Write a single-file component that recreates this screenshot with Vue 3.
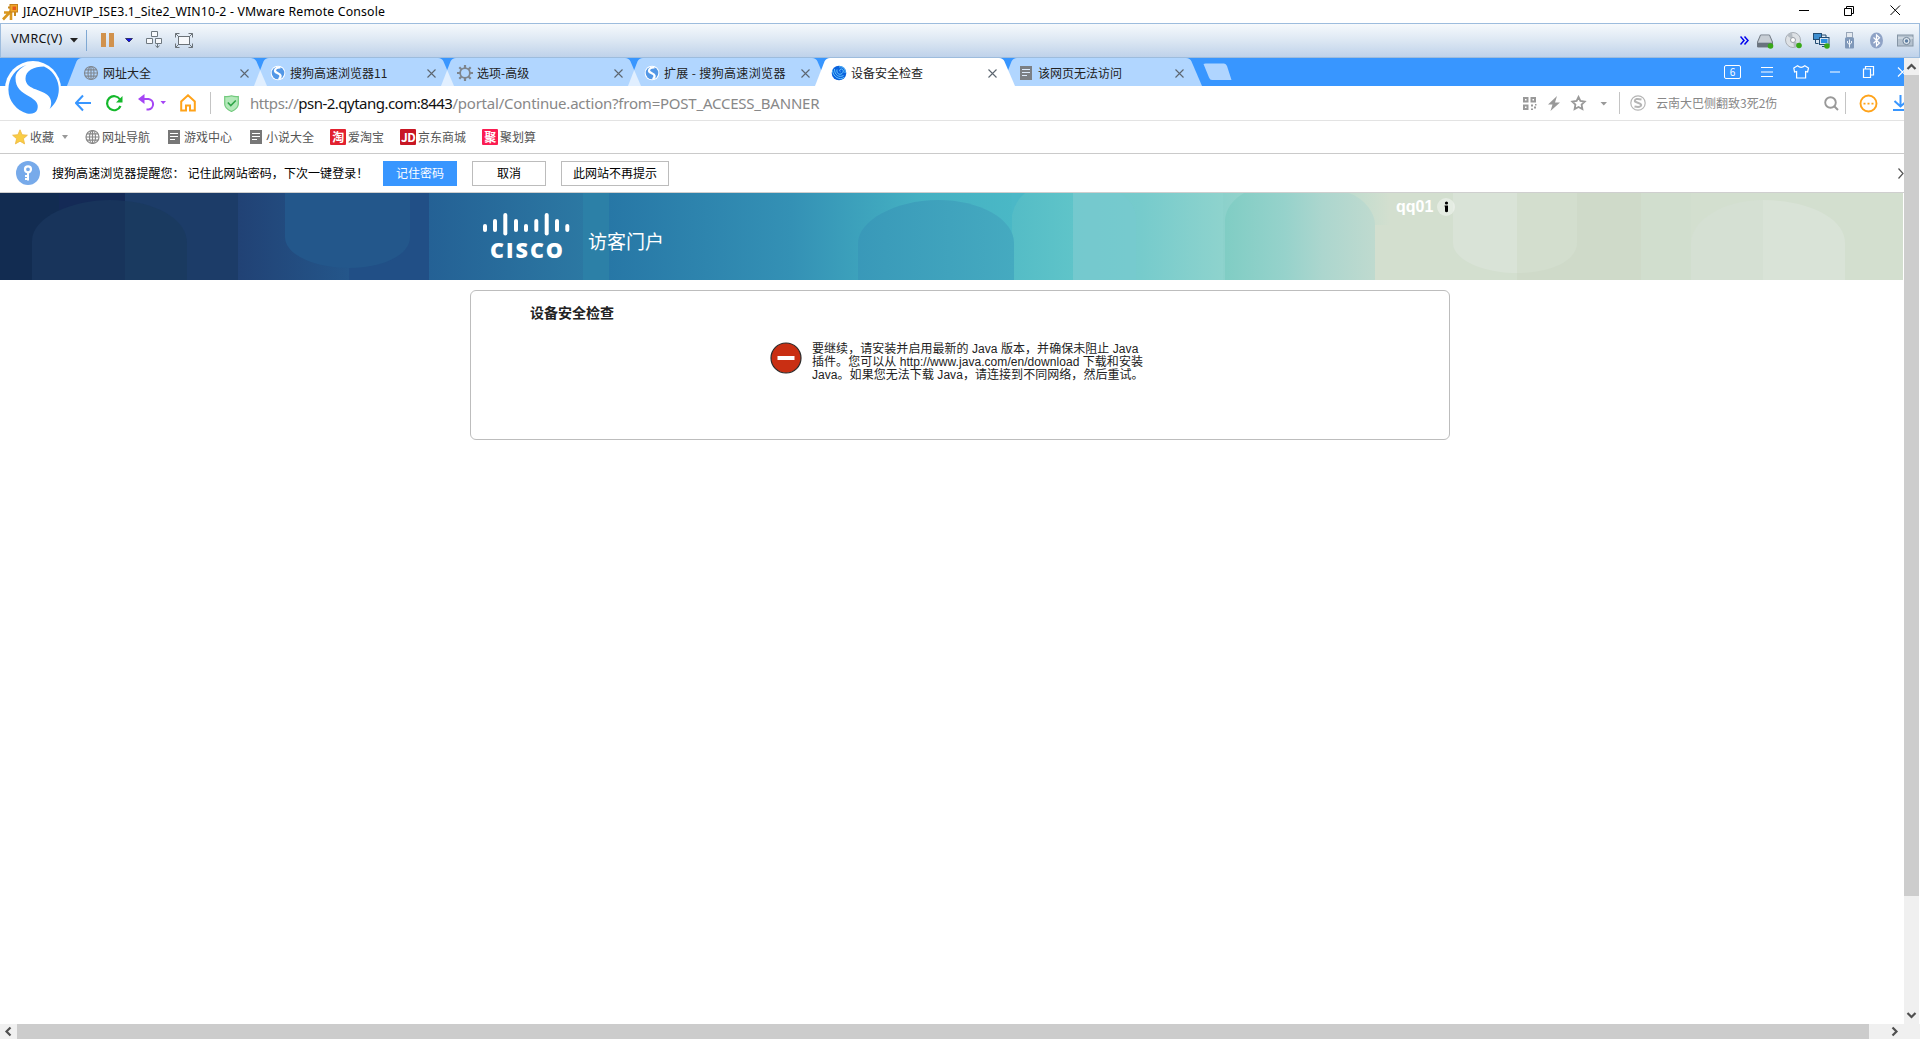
<script setup>
const tabs = [
  { title: '网址大全', icon: 'globe' },
  { title: '搜狗高速浏览器11', icon: 'sogou' },
  { title: '选项-高级', icon: 'gear' },
  { title: '扩展 - 搜狗高速浏览器', icon: 'sogou', spread: true },
  { title: '设备安全检查', icon: 'swirl', active: true },
  { title: '该网页无法访问', icon: 'page' },
]
const bars = [
  [485, 31, 39], [495, 26, 39], [505.3, 20, 42.5], [516, 26, 39], [526, 31, 39],
  [536.3, 26, 39], [546.7, 20, 42.5], [557, 26, 39], [567.3, 31, 39],
]
</script>

<template>
  <div class="window">
    <header class="titlebar">
      <svg class="vm-logo" width="17" height="18" viewBox="0 0 17 18">
        <path d="M6 4.500h4M13 9v4" fill="none" stroke="#c98a1c" stroke-width="2" />
        <path d="M1 16.500 8.500 8.500M2 9.500h7v7.500" fill="none" stroke="#d9971f" stroke-width="2.600" />
        <rect x="8" y="1.500" width="7.500" height="7.500" fill="#f0a628" stroke="#c5801a" />
        <rect x="10.500" y="3.500" width="3.500" height="3.500" fill="#e4581c" />
      </svg>
      <span class="title">JIAOZHUVIP_ISE3.1_Site2_WIN10-2 - VMware Remote Console</span>
      <svg class="win-controls" width="104" height="12" viewBox="0 0 104 12" fill="none" stroke="#000">
        <path d="M0 6.500h10M45.500 4.500h7v7h-7zM47.500 4.500v-2h7v7h-2M91.500 1.500l9.500 9.500M101 1.500l-9.500 9.500" />
      </svg>
    </header>

    <div class="vmbar">
      <span class="vmrc">VMRC(V)</span>
      <svg class="caret" width="8" height="5"><path d="M0 0h8l-4 4.500z" fill="#222" /></svg>
      <i class="vsep"></i>
      <svg class="pause" width="13" height="14"><path d="M0 0h5v14H0zM8 0h5v14H8z" fill="#d1924d" /></svg>
      <svg class="caret2" width="8" height="5"><path d="M.5 .5h7l-3.500 3.500z" fill="#11e" stroke="#002" stroke-width=".6" /></svg>
      <svg class="cad" width="17" height="18" viewBox="0 0 17 18" fill="#f7f9fc" stroke="#6e7880">
        <path d="M5.500.5h6v5h-6zM.5 7.500h6v5h-6zM9.500 7.500h6v5h-6z" />
        <path d="M11.500 12.500v4M9.500 14.500l2 2.300 2-2.300" fill="none" />
      </svg>
      <svg class="full" width="18" height="15" viewBox="0 0 18 15" fill="none" stroke="#6b7278">
        <rect x="3.500" y="3.500" width="11" height="8" fill="#f6f8fb" />
        <path d="M.5 4.500v-4h4M13.500.5h4v4M17.500 10.500v4h-4M4.500 14.500h-4v-4M.5.5l3 3M17.500.5l-3 3M.5 14.500l3-3M17.500 14.500l-3-3" />
      </svg>
      <div class="devices">
        <svg width="9" height="9" viewBox="0 0 9 9"><path d="M.5.5l3.500 4-3.500 4M4.500.5l3.500 4-3.500 4" fill="none" stroke="#00e" stroke-width="1.500" /></svg>
        <svg width="17" height="16" viewBox="0 0 17 16">
          <path d="M3.500 2h9l3 7v5H.5V9z" fill="#a9b2bb" stroke="#757d86" /><path d="M4 2.500h8l2.500 6.500H1.500z" fill="#c8ced5" />
          <path d="M.5 10h15v4H.5z" fill="#69737e" /><circle cx="13.500" cy="13" r="2.800" fill="#38a818" />
        </svg>
        <svg width="17" height="17" viewBox="0 0 17 17">
          <circle cx="8" cy="8" r="7.500" fill="#dde1e5" stroke="#a9afb6" /><path d="M8 8 2 3.500A7.500 7.500 0 0 1 7 .6zM8 8l6 4.500a7 7 0 0 1-5 3z" fill="#b5bcc3" />
          <circle cx="8" cy="8" r="2.500" fill="#fff" stroke="#999fa6" /><circle cx="14" cy="13.500" r="2.800" fill="#38a818" />
        </svg>
        <svg width="17" height="17" viewBox="0 0 17 17" stroke="#234c72">
          <rect x=".5" y="1.500" width="8" height="6" fill="#3f8fd0" /><path d="M2.500 8v3.500h3M9 3h4v2M9 14.500h6" fill="none" />
          <rect x="6.500" y="5.500" width="9.500" height="7" fill="#d7e6f3" /><rect x="8" y="7" width="6.500" height="4" fill="#2b8ee0" stroke="none" />
          <circle cx="14" cy="14" r="2.800" fill="#38a818" stroke="none" />
        </svg>
        <svg width="11" height="17" viewBox="0 0 11 17">
          <rect x="2.500" y=".5" width="6" height="5" fill="#e4e9ef" stroke="#98a6b8" /><rect x="1" y="5.500" width="9" height="11" rx="1" fill="#7f98b9" />
          <path d="M5.500 7.500v8M3.500 9v2l2 1.500 2-1.500V9" fill="none" stroke="#eef3f8" />
        </svg>
        <svg width="13" height="17" viewBox="0 0 13 17"><ellipse cx="6.500" cy="8.500" rx="6.500" ry="8" fill="#8fa3c6" /><path d="M3.500 5.500l6 5.500-3 2.800V3l3 2.800-6 5.500" fill="none" stroke="#fff" stroke-width="1.200" /></svg>
        <svg width="17" height="13" viewBox="0 0 17 13"><rect x=".5" y="1" width="15.500" height="11" fill="#b5c2cf" stroke="#8595a5" /><path d="M1 4h15" stroke="#e4ebf1" /><circle cx="9.500" cy="7" r="3.600" fill="#dfe7ee" stroke="#71859a" /><circle cx="9.500" cy="7" r="1.700" fill="#5d7ea3" /></svg>
      </div>
    </div>

    <div class="desk">
      <div class="browser">
        <svg class="sogou-logo" width="64" height="60" viewBox="0 -2 64 60">
          <circle cx="33" cy="31" r="28" fill="#fff" />
          <path d="M26.500 7A25.200 25.200 0 0 0 27 55.500c4 1 9 0 10.300-4 2-6-2-9.500-8-13C21 34 15.500 30 15.500 20c0-5 4-9.500 11-13z" fill="#3896ff" />
          <path d="M44 8.500c-10 0-18.500 4-18.500 12 0 11 15 10.500 22 16.500 4.500 4 4.500 9.500 2 14A25.200 25.200 0 0 0 44 8.500z" fill="#3896ff" />
        </svg>
        <div class="tabstrip">
          <div v-for="t in tabs" :key="t.title" class="tab" :class="{ active: t.active, spread: t.spread }">
            <svg class="shape" width="200" height="28" viewBox="0 0 200 28"><path d="M0 28 9.500 3.500Q11 0 15 0H184Q188 0 189.500 3.500L200 28z" /></svg>
            <svg class="fav" width="16" height="16" viewBox="0 0 16 16">
              <g v-if="t.icon === 'globe'" fill="none" stroke="#808891" stroke-width="1.200"><circle cx="8" cy="8" r="6.500" /><ellipse cx="8" cy="8" rx="3" ry="6.500" /><path d="M1.500 8h13M8 1.500v13M2.500 4.800h11M2.500 11.200h11" /></g>
              <g v-else-if="t.icon === 'sogou'"><circle cx="8" cy="8" r="7.300" fill="#fff" /><circle cx="8" cy="8" r="6.300" fill="#5297e6" /><path d="M10.500 2.500C7.500 2 4.800 3.500 5 6c.3 2.300 5.200 2.300 5.500 4.500.2 1.500-.5 3-2 3.500" fill="none" stroke="#fff" stroke-width="2.300" /></g>
              <g v-else-if="t.icon === 'gear'" fill="none" stroke="#7e858d"><circle cx="8" cy="8" r="4.900" stroke-width="1.800" /><path d="M8 0v3M8 13v3M0 8h3M13 8h3M2.300 2.300l2 2M11.700 11.700l2 2M2.300 13.700l2-2M11.700 4.300l2-2" stroke-width="2.200" /></g>
              <g v-else-if="t.icon === 'swirl'"><circle cx="8" cy="8" r="7.300" fill="#0a62dd" /><path d="M1.500 5.500C2 12 9 15.500 13 12.500M3.500 4c0 6 4.500 9 9 6.500M6 4.500c-.8 4 2.500 6 5 4s1-5-1-4.500-1.500 2.500-.5 2.800M8 2c4-1 7 2 6 6" fill="none" stroke="#6fd0ff" stroke-width=".9" /></g>
              <g v-else><path d="M2 1h12v14H2z" fill="#7b7f84" /><path d="M4 4.500h8M4 7.500h8M4 10.500h5" stroke="#dbe9fa" stroke-width="1.200" /></g>
            </svg>
            <span class="tab-title">{{ t.title }}</span>
            <svg class="close" width="9" height="9" viewBox="0 0 9 9"><path d="M.5.5l8 8M8.500.5l-8 8" fill="none" stroke="#5d6670" stroke-width="1.100" /></svg>
          </div>
          <svg class="newtab" width="29" height="18"><path d="M2.500.500H21Q23 .5 24 3l4.500 14H9Q7 17 6 14.500L.5 1z" fill="#b0d5ff" /></svg>
          <div class="strip-tools">
            <span class="count">6</span>
            <svg width="179" height="14" viewBox="0 0 179 14" fill="none" stroke="#fff" stroke-width="1.200">
              <path d="M3 2.500h12M3 7h12M3 11.500h12" />
              <path d="M39.500.800 35.800 3l.8 4 2-.5v6.500h9V6.500l2 .5.9-4-3.700-2.200q-3.700 3-7.300 0z" />
              <path d="M72 7h10M105.500 4h7v8.500h-7zM107.500 4v-2.500h8v8.500h-2.500M140 2.500l9 9M149 2.500l-9 9" />
            </svg>
          </div>
        </div>

        <div class="addressbar">
          <svg class="nav" width="112" height="20" viewBox="0 0 112 20" fill="none" stroke-width="2">
            <path d="M16 10H1M8 2.500 1 10l7 7.500" stroke="#3896ff" />
            <path d="M45 6.500A7 7 0 1 0 45.500 13" stroke="#14b82b" stroke-width="2.200" /><path d="M47.500 3v6.500H41z" fill="#14b82b" />
            <path d="M66 6H73.500a5.300 5.300 0 0 1 0 10.500h-2" stroke="#a545f5" /><path d="M69.500 1v10l-6.500-5z" fill="#a545f5" /><path d="M85.500 8h5.500l-2.800 3.200z" fill="#a545f5" />
          </svg>
          <svg class="home" width="16" height="18" viewBox="0 0 16 18"><path d="M1.200 7.500 8 1.300l6.800 6.200V16.500H10v-5H6v5H1.200z" fill="none" stroke="#ffa31a" stroke-width="2" /></svg>
          <i class="asep"></i>
          <svg class="shield" width="15" height="17" viewBox="0 0 15 17"><path d="M.7 1.500Q4.500 2 7.500.8 10.500 2 14.300 1.500V9q0 4.500-6.800 7.500Q.7 13.500.7 9z" fill="#b4e8ba" stroke="#73ca7e" stroke-width="1.200" /><path d="M3.800 7.500 6.800 10.500l5-5" fill="none" stroke="#2fa548" stroke-width="1.600" /></svg>
          <span class="url"><span class="scheme">https://</span><b>psn-2.qytang.com:8443</b>/portal/Continue.action?from=POST_ACCESS_BANNER</span>
          <div class="addr-right">
            <svg width="85" height="16" viewBox="0 0 85 16" fill="none" stroke="#999" stroke-width="2">
              <path d="M2 3h3.500v3.500H2zM9.500 3H13v3.500H9.500zM2 10.500h3.500V14H2z" /><path d="M9 9.500h2v2H9zM12 11.500h2v2h-2zM9 13.500h2v1.500H9zM13 9h1.500v1.500H13z" fill="#999" stroke="none" />
              <path d="M35 1l-9 8.500h4.500L28.500 16 38 7.500h-5z" fill="#999" stroke="none" />
              <path d="M56.500 2l1.900 4 4.300.6-3.100 3 .8 4.400-3.900-2.100-3.900 2.100.8-4.400-3.100-3 4.300-.6z" stroke-width="1.800" /><path d="M78.500 7H85l-3.200 3.500z" fill="#999" stroke="none" />
            </svg>
            <i class="asep s1"></i>
            <svg class="s-gray" width="16" height="16" viewBox="0 0 16 16" fill="none" stroke="#b5b5b5"><circle cx="8" cy="8" r="7.200" stroke-width="1.200" /><path d="M11.500 4.500Q5 3 4.800 5.800C4.600 8 11.300 7.500 11.200 10.200Q11 12.700 4.500 11.500" stroke-width="2" /></svg>
            <span class="query">云南大巴侧翻致3死2伤</span>
            <svg class="mag" width="15" height="15" viewBox="0 0 15 15" fill="none" stroke="#999" stroke-width="1.900"><circle cx="6.500" cy="6.500" r="5.300" /><path d="M10.500 10.500l3.500 3.500" /></svg>
            <i class="asep s2"></i>
            <svg class="dots" width="19" height="19" viewBox="0 0 19 19"><circle cx="9.500" cy="9.500" r="8" fill="none" stroke="#ffa31a" stroke-width="1.900" /><path d="M4.500 8.700h2v1.700h-2zM8.500 8.700h2v1.700h-2zM12.500 8.700h2v1.700h-2z" fill="#ffa31a" /></svg>
            <svg class="down" width="11" height="16" viewBox="0 0 11 16" fill="none" stroke="#3896ff" stroke-width="2"><path d="M7.500 0v11M1.500 6l6 5.500 4-3.500M0 15h11" /></svg>
          </div>
        </div>

        <nav class="bookmarks">
          <svg class="star" width="16" height="16" viewBox="0 0 16 16"><path d="M8 .8l2.100 4.900 5.300.5-4 3.500 1.200 5.200L8 12.200l-4.600 2.700 1.200-5.200-4-3.500 5.300-.5z" fill="#f9cd45" stroke="#eeb640" stroke-width=".8" /></svg>
          <span>收藏</span>
          <svg class="bcaret" width="6" height="4"><path d="M0 0h6L3 4z" fill="#999" /></svg>
          <svg class="bm" width="15" height="16" viewBox="0 0 15 16" fill="none" stroke="#888" stroke-width="1.200"><circle cx="7.500" cy="8" r="6.500" /><ellipse cx="7.500" cy="8" rx="3" ry="6.500" /><path d="M1 8h13M7.500 1.500v13M2 4.800h11M2 11.200h11" /></svg>
          <span>网址导航</span>
          <svg class="bm pg" width="12" height="14" viewBox="0 0 12 14"><path d="M0 0h12v14H0z" fill="#777" /><path d="M2 3.500h8M2 6.500h8M2 9.500h5" stroke="#fff" stroke-width="1.200" /></svg>
          <span class="g4">游戏中心</span>
          <svg class="bm pg" width="12" height="14" viewBox="0 0 12 14"><path d="M0 0h12v14H0z" fill="#777" /><path d="M2 3.500h8M2 6.500h8M2 9.500h5" stroke="#fff" stroke-width="1.200" /></svg>
          <span class="g4">小说大全</span>
          <b class="sq tao">淘</b><span>爱淘宝</span>
          <b class="sq jd">JD</b><span>京东商城</span>
          <b class="sq ju">聚</b><span>聚划算</span>
        </nav>

        <div class="notice">
          <svg class="key" width="24" height="24" viewBox="0 0 24 24"><circle cx="12" cy="12" r="12" fill="#77aaea" /><circle cx="12" cy="8.300" r="3" fill="none" stroke="#fff" stroke-width="2.200" /><path d="M12 11.500v8M12 15h-3M12 18h-3" stroke="#fff" stroke-width="2" /></svg>
          <span class="msg">搜狗高速浏览器提醒您： 记住此网站密码，下次一键登录！</span>
          <button class="btn primary">记住密码</button>
          <button class="btn">取消</button>
          <button class="btn wide">此网站不再提示</button>
          <svg class="nclose" width="6" height="11" viewBox="0 0 6 11"><path d="M.5 .5l4.500 5-4.500 5" fill="none" stroke="#555" stroke-width="1.200" /></svg>
        </div>

        <div class="banner">
          <svg class="art" width="1903" height="87" viewBox="0 0 1903 87">
            <defs>
              <linearGradient id="g1" x1="238" x2="349" gradientUnits="userSpaceOnUse"><stop offset="0" stop-color="#214275" /><stop offset="1" stop-color="#24568a" /></linearGradient>
              <linearGradient id="g2" x1="429" x2="609" gradientUnits="userSpaceOnUse"><stop offset="0" stop-color="#246195" /><stop offset="1" stop-color="#2d7ca5" /></linearGradient>
              <linearGradient id="g3" x1="609" x2="1015" gradientUnits="userSpaceOnUse"><stop offset="0" stop-color="#2777a6" /><stop offset=".45" stop-color="#3491b5" /><stop offset=".76" stop-color="#44b0c2" /><stop offset="1" stop-color="#4ab8c6" /></linearGradient>
              <linearGradient id="g4" x1="800" x2="1014" gradientUnits="userSpaceOnUse"><stop offset="0" stop-color="#3591b7" /><stop offset=".4" stop-color="#3b9cba" /><stop offset="1" stop-color="#45aac0" /></linearGradient>
              <linearGradient id="g5" x1="1073" x2="1223" gradientUnits="userSpaceOnUse"><stop offset="0" stop-color="#71c8cc" /><stop offset=".45" stop-color="#76cbcc" /><stop offset="1" stop-color="#8ed3cd" /></linearGradient>
              <linearGradient id="g6" x1="1225" x2="1375" gradientUnits="userSpaceOnUse"><stop offset="0" stop-color="#80cdc4" /><stop offset=".4" stop-color="#96d2cb" /><stop offset=".65" stop-color="#acd6ce" /><stop offset="1" stop-color="#bfdacf" /></linearGradient>
              <linearGradient id="g7" x1="1223" x2="1390" gradientUnits="userSpaceOnUse"><stop offset="0" stop-color="#8bd1cb" /><stop offset=".6" stop-color="#b2dacd" /><stop offset="1" stop-color="#d3dfcf" /></linearGradient>
              <linearGradient id="g8" x1="1012" x2="1073" gradientUnits="userSpaceOnUse"><stop offset="0" stop-color="#54bcc6" /><stop offset="1" stop-color="#5fc4c9" /></linearGradient>
            </defs>
            <rect width="59" height="87" fill="#122c51" /><rect x="59" width="66" height="87" fill="#142a56" />
            <rect x="125" width="113" height="87" fill="#1c3c68" />
            <path d="M32 87V48C32 24 72 7 110 7q8 0 15 1v79z" fill="#18345b" /><path d="M125 8c35 3 62 20 62 42v37h-62z" fill="#1a3a60" />
            <rect x="238" width="111" height="87" fill="url(#g1)" /><rect x="349" width="80" height="87" fill="#214f86" />
            <path d="M285 0v44c0 18 30 31 64 31s61-13 61-31V0z" fill="#23578b" />
            <rect x="429" width="180" height="87" fill="url(#g2)" /><rect x="583" width="26" height="87" fill="#2c80a7" />
            <rect x="609" width="406" height="87" fill="url(#g3)" />
            <path d="M1012 0h61v87h-61z" fill="url(#g8)" /><path d="M1012 0h13q-10 8-13 22z" fill="#4bb8c7" />
            <path d="M858 87V50C858 28 895 7 938 7c42 0 76 19 76 43v37z" fill="url(#g4)" />
            <rect x="1073" width="150" height="87" fill="url(#g5)" />
            <path d="M1073 0h47q14 8 16 24v63h-63z" fill="#76cacf" opacity=".65" />
            <rect x="1223" width="167" height="87" fill="url(#g7)" />
            <path d="M1225 87V26q2-16 19-26h105c16 6 26 20 26 32v55z" fill="url(#g6)" />
            <rect x="1375" y="32" width="30" height="55" fill="#d3dfcf" />
            <rect x="1389" width="514" height="87" fill="#d3dfcf" />
            <rect x="1517" width="124" height="87" fill="#cfdac9" /><rect x="1641" width="50" height="87" fill="#d1dece" />
            <path d="M1453 0v50c0 16 28 30 64 30V0z" fill="#d9e3d7" /><path d="M1517 0h60v50c0 17-25 30-60 30z" fill="#d3dece" />
            <path d="M1691 87V50c0-23 33-43 72-43v80z" fill="#d5e0d3" /><path d="M1763 7c45 0 82 18 82 43v37h-82z" fill="#d9e3d7" />
            <g stroke="#fff" stroke-width="4" stroke-linecap="round"><path v-for="b in bars" :key="b[0]" :d="`M${b[0]} ${b[1] + 2}V${b[2] - 2}`" /></g>
            <text class="cisco" x="490" y="64.500" textLength="73" lengthAdjust="spacing">CISCO</text>
          </svg>
          <span class="portal">访客门户</span>
          <span class="user">qq01</span>
          <span class="info"><svg width="5" height="12" viewBox="0 0 5 12"><circle cx="2.500" cy="2" r="1.600" /><path d="M.5 4.500h3.500v6q-1.500 1.500-3 0v-4z" /></svg></span>
        </div>

        <main class="page">
          <section class="card">
            <h1>设备安全检查</h1>
            <div class="alert">
              <svg width="32" height="32" viewBox="0 0 32 32"><circle cx="16" cy="16" r="15" fill="#c92f13" stroke="#2b2b2b" stroke-width="1.200" /><path d="M7.500 16h17" stroke="#fff" stroke-width="4" /></svg>
              <p>要继续，请安装并启用最新的 Java 版本，并确保未阻止 Java<br />插件。您可以从 http://www.java.com/en/download 下载和安装<br />Java。如果您无法下载 Java，请连接到不同网络，然后重试。</p>
            </div>
          </section>
        </main>
      </div>
      <div class="vscroll">
        <svg width="15" height="17"><path d="M3.500 11l4-4 4 4" fill="none" stroke="#505050" stroke-width="2.200" /></svg>
        <div class="vthumb"></div>
        <svg width="15" height="17"><path d="M3.500 6l4 4 4-4" fill="none" stroke="#505050" stroke-width="2.200" /></svg>
      </div>
    </div>
    <div class="hscroll">
      <svg width="17" height="15"><path d="M10.500 3.500l-4 4 4 4" fill="none" stroke="#505050" stroke-width="2.200" /></svg>
      <div class="hthumb"></div>
      <svg class="hr" width="17" height="15"><path d="M6.500 3.500l4 4-4 4" fill="none" stroke="#505050" stroke-width="2.200" /></svg>
    </div>
  </div>
</template>

<style>
body { overflow: hidden; background: #fff; }
</style>

<style scoped>
* { box-sizing: border-box; }
svg { display: block; flex: none; }
.window { width: 1920px; height: 1039px; display: flex; flex-direction: column; overflow: hidden; font: 12px/16px "Noto Sans", "Noto Sans CJK SC", sans-serif; color: #222; white-space: nowrap; }
.titlebar { height: 23px; display: flex; align-items: center; flex: none; }
.vm-logo { margin-left: 2px; }
.title { margin-left: 4px; font-size: 12.3px; color: #000; letter-spacing: .16px; }
.win-controls { margin-left: auto; margin-right: 17px; margin-top: -3px; }
.vmbar { height: 35px; flex: none; display: flex; align-items: center; border: 1px solid #9dbcdd; background: linear-gradient(#f6f9fc, #dce7f3 50%, #bfd2ea); }
.vmrc { margin-left: 10px; width: 53px; font-size: 12.5px; letter-spacing: .3px; color: #111; margin-top: -3px; }
.caret { margin-left: 6px; margin-top: -1px; }
.vsep { margin-left: 8px; width: 1px; height: 21px; background: #7fa8d3; }
.pause { margin-left: 14px; margin-top: -1px; }
.caret2 { margin-left: 11px; }
.cad { margin-left: 13px; margin-top: -1px; }
.full { margin-left: 12px; margin-top: -1px; }
.devices { margin-left: auto; margin-right: 5px; display: flex; align-items: center; }
.devices svg + svg { margin-left: 11px; }
.devices svg:nth-child(2) { margin-left: 8px; }
.devices svg:nth-child(5) { margin-left: 14px; }
.devices svg:nth-child(6) { margin-left: 15px; }
.devices svg:nth-child(7) { margin-left: 14px; }
.desk { flex: 1; display: flex; min-height: 0; }
.browser { position: relative; width: 1904px; overflow: hidden; font-family: "Noto Sans CJK SC", sans-serif; }
.sogou-logo { position: absolute; left: 0; top: -2px; z-index: 5; }
.tabstrip { height: 28px; background: #3896ff; display: flex; padding-left: 67px; align-items: center; }
.tab { position: relative; width: 200px; height: 28px; margin-right: -13px; display: flex; align-items: center; flex: none; }
.shape { position: absolute; left: 0; top: 0; fill: rgba(255, 255, 255, .61); }
.active { z-index: 2; }
.active .shape { fill: #fff; }
.fav { position: relative; margin-left: 16px; margin-top: 2px; }
.tab-title { position: relative; margin-left: 4px; color: #222; margin-top: 2px; }
.spread .tab-title { letter-spacing: .35px; }
.close { position: relative; margin-left: auto; margin-right: 18px; margin-top: 2px; }
.newtab { margin-left: 14px; margin-top: -1px; }
.strip-tools { margin-left: auto; display: flex; align-items: center; width: 180px; }
.count { width: 17px; height: 14px; border: 1px solid #fff; border-radius: 2px; color: #fff; font-size: 10px; line-height: 12px; text-align: center; flex: none; margin-right: 17px; }
.addressbar { height: 35px; border-bottom: 1px solid #e3e3e3; display: flex; align-items: center; }
.nav { margin-left: 75px; }
.home { margin-left: -7px; }
.asep { width: 1px; height: 22px; background: #c4c4c4; margin-left: 14px; }
.shield { margin-left: 13px; }
.url { margin-left: 11px; font: 15px/20px "Noto Sans", sans-serif; color: #888; letter-spacing: -.22px; }
.url b { font-weight: 400; color: #111; letter-spacing: -.52px; }
.scheme { letter-spacing: -.42px; }
.addr-right { margin-left: auto; display: flex; align-items: center; width: 382px; }
.s1 { margin-left: 12px; }
.s-gray { margin-left: 10px; }
.query { margin-left: 10px; color: #888; width: 169px; }
.s2 { margin-left: 6px; }
.dots { margin-left: 13px; }
.down { margin-left: 15px; }
.bookmarks { height: 33px; border-bottom: 1px solid #cacaca; display: flex; align-items: center; padding-left: 12px; color: #555; }
.bookmarks span { margin-left: 2px; }
.bcaret { margin-left: 8px; }
.bm { margin-left: 17px; }
.bookmarks .pg { margin-left: 18px; }
.bookmarks .g4 { margin-left: 4px; }
.sq { width: 16px; height: 16px; margin-left: 16px; border-radius: 1px; color: #fff; font-size: 12px; line-height: 15px; text-align: center; letter-spacing: -.5px; }
.tao { background: #e2212f; }
.jd { background: #c81623; }
.ju { background: #fb1c52; }
.notice { height: 39px; border-bottom: 1px solid #cfcfcf; display: flex; align-items: center; }
.key { margin-left: 16px; }
.msg { margin-left: 12px; width: 331px; color: #000; letter-spacing: .06px; }
.btn { width: 74px; height: 25px; padding: 0; border: 1px solid #bcbcbc; background: #fff; font: 12px/20px "Noto Sans CJK SC", sans-serif; color: #000; margin-right: 15px; }
.primary { border-color: #3896ff; background: #3896ff; color: #fff; }
.wide { width: 108px; }
.nclose { margin-left: auto; }
.banner { position: relative; height: 87px; display: flex; color: #fff; }
.art { position: absolute; left: 0; top: 0; }
.cisco { font: 800 21.500px "Open Sans", sans-serif; fill: #fff; }
.portal { position: relative; margin: 34px 0 0 588px; width: 808px; font-size: 19px; line-height: 28px; }
.user { position: relative; margin-top: 4px; font: bold 16px/20px "Liberation Sans", sans-serif; width: 41px; }
.info { position: relative; margin-top: 5px; width: 18px; height: 18px; border-radius: 50%; background: rgba(255, 255, 255, .4); display: flex; align-items: center; justify-content: center; }
.page { padding: 10px 0 0 470px; }
.card { width: 980px; height: 150px; border: 1px solid #bdbdbd; border-radius: 6px; }
h1 { margin: 10px 0 0 59px; font-size: 14px; line-height: 22px; color: #222; }
.alert { display: flex; margin: 19px 0 0 299px; }
.alert p { margin: 1px 0 0 10px; font: 12px/13px "Liberation Sans", "Noto Sans CJK SC", sans-serif; letter-spacing: .05px; color: #222; }
.vscroll { width: 16px; background: #f0f0f0; border-right: 1px solid #fff; display: flex; flex-direction: column; }
.vthumb { height: 821px; margin-bottom: auto; background: #cdcdcd; }
.hscroll { height: 15px; flex: none; background: #f0f0f0; display: flex; }
.hthumb { width: 1852px; background: #cccccc; }
.hr { margin-left: 17px; }
</style>
